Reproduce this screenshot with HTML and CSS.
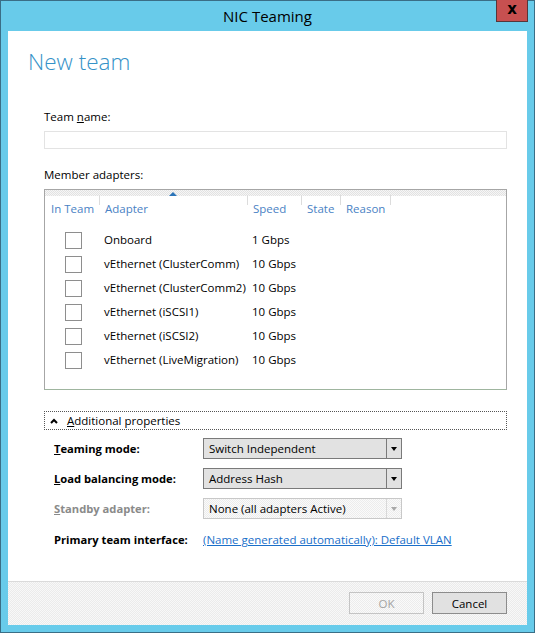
FILE: index.html
```html
<!DOCTYPE html>
<html>
<head>
<meta charset="utf-8">
<link rel="stylesheet" href="styles.css">
</head>
<body>
<div class="window">
  <div class="titlebar">
    <span class="title">NIC Teaming</span>
    <span class="close">x</span>
  </div>
  <div class="client">
    <div class="main">
      <h1 class="heading">New team</h1>
      <label class="field-label">Team <u>n</u>ame:</label>
      <div class="textbox"></div>
      <label class="field-label members">Member adapters:</label>
      <div class="listbox">
        <div class="list-top"></div>
        <div class="grid header">
          <div class="hcell">In Team</div>
          <div class="hcell sep sorted">Adapter<span class="sort-arrow"></span></div>
          <div class="hcell sep">Speed</div>
          <div class="hcell sep">State</div>
          <div class="hcell sep">Reason</div>
          <div class="hcell sep"></div>
        </div>
        <div class="grid row"><div class="cbcell"><span class="checkbox"></span></div><div class="cell">Onboard</div><div class="cell">1 Gbps</div></div>
        <div class="grid row"><div class="cbcell"><span class="checkbox"></span></div><div class="cell">vEthernet (ClusterComm)</div><div class="cell">10 Gbps</div></div>
        <div class="grid row"><div class="cbcell"><span class="checkbox"></span></div><div class="cell">vEthernet (ClusterComm2)</div><div class="cell">10 Gbps</div></div>
        <div class="grid row"><div class="cbcell"><span class="checkbox"></span></div><div class="cell">vEthernet (iSCSI1)</div><div class="cell">10 Gbps</div></div>
        <div class="grid row"><div class="cbcell"><span class="checkbox"></span></div><div class="cell">vEthernet (iSCSI2)</div><div class="cell">10 Gbps</div></div>
        <div class="grid row"><div class="cbcell"><span class="checkbox"></span></div><div class="cell">vEthernet (LiveMigration)</div><div class="cell">10 Gbps</div></div>
      </div>
      <div class="expander">
        <svg class="chevron" width="8" height="6" viewBox="0 0 8 6"><path d="M1 5 L4 2 L7 5" fill="none" stroke="#000" stroke-width="2"/></svg>
        <span><u>A</u>dditional properties</span>
      </div>
      <div class="props">
        <div class="prop">
          <span class="plabel"><u>T</u>eaming mode:</span>
          <div class="combo"><span class="combo-text">Switch Independent</span><span class="combo-btn"><span class="tri"></span></span></div>
        </div>
        <div class="prop">
          <span class="plabel"><u>L</u>oad balancing mode:</span>
          <div class="combo"><span class="combo-text">Address Hash</span><span class="combo-btn"><span class="tri"></span></span></div>
        </div>
        <div class="prop">
          <span class="plabel disabled"><u>S</u>tandby adapter:</span>
          <div class="combo off"><span class="combo-text">None (all adapters Active)</span><span class="combo-btn"><span class="tri"></span></span></div>
        </div>
        <div class="prop">
          <span class="plabel">Primary team interface:</span>
          <a class="link">(Name generated automatically): Default VLAN</a>
        </div>
      </div>
    </div>
    <div class="footer">
      <span class="btn btn-off">OK</span>
      <span class="btn">Cancel</span>
    </div>
  </div>
</div>
</body>
</html>
```

FILE: styles.css
```css
* { box-sizing: border-box; }
html, body { margin: 0; padding: 0; }
body {
  font-family: "Open Sans", "Liberation Sans", sans-serif;
  font-size: 11.5px;
  color: #000;
}
.window {
  width: 535px;
  height: 633px;
  background: #68cbea;
  border: 1px solid #3a6e86;
  padding: 0 7px 7px 7px;
  display: flex;
  flex-direction: column;
  position: relative;
}
.titlebar {
  height: 30px;
  flex: none;
  display: flex;
  align-items: center;
  justify-content: center;
}
.title {
  font-size: 15px;
  color: #000;
  margin-top: 0px;
}
.close {
  position: absolute;
  top: -1px;
  right: 6px;
  width: 32px;
  height: 22px;
  background: #c75050;
  border: 1px solid #56363a;
  border-top: none;
  color: #000;
  font-weight: bold;
  font-family: "DejaVu Sans", sans-serif;
  font-size: 15px;
  line-height: 19px;
  text-align: center;
}
.client {
  flex: 1;
  background: #fff;
  display: flex;
  flex-direction: column;
}
.main {
  flex: 1;
  padding: 15px 20px 0 36px;
  display: flex;
  flex-direction: column;
}
.heading {
  margin: 0 0 0 -16px;
  font-size: 22.5px;
  line-height: 32px;
  height: 32px;
  font-weight: 300;
  color: #3592c8;
}
.field-label {
  display: block;
  margin-top: 30px;
  line-height: 17px;
  height: 16px;
}
.field-label.members { margin-top: 17px; }
.textbox {
  margin-top: 7px;
  width: 463px;
  height: 18px;
  border: 1px solid #e3e3e3;
}
.listbox {
  margin-top: 7px;
  width: 463px;
  height: 201px;
  border: 1px solid #a6a6a6;
  border-bottom-color: #9fb59f;
}
.list-top {
  height: 6px;
  background: repeating-conic-gradient(#e2e2e2 0 25%, #f6f6f6 0 50%) 0 0 / 2px 2px;
}
.grid {
  display: grid;
  grid-template-columns: 54px 148px 54px 39px 50px 1fr;
}
.header {
  height: 32px;
}
.hcell {
  position: relative;
  color: #4a82c4;
  padding: 5px 0 0 6px;
  line-height: 16px;
  white-space: nowrap;
}
.hcell.sep::before {
  content: "";
  position: absolute;
  left: 0;
  top: -1px;
  height: 10px;
  border-left: 1px solid #dcdcdc;
}
.sort-arrow {
  position: absolute;
  left: 70px;
  top: -4px;
  width: 0;
  height: 0;
  border-left: 4px solid transparent;
  border-right: 4px solid transparent;
  border-bottom: 4px solid #2b74b8;
}
.row {
  height: 24px;
  align-items: center;
}
.cbcell { padding-left: 20px; display: flex; align-items: center; }
.checkbox {
  width: 17px;
  height: 17px;
  border: 1px solid #8e8e8e;
  background: #fff;
}
.cell {
  padding-left: 5px;
  white-space: nowrap;
  line-height: 18px;
}
.expander {
  margin-top: 21px;
  width: 463px;
  height: 19px;
  border: 1px dotted #555;
  display: flex;
  align-items: center;
  padding-left: 5px;
  gap: 9px;
}
.chevron { flex: none; }
.props {
  margin-top: 8px;
  padding-left: 10px;
  display: flex;
  flex-direction: column;
  gap: 9px;
}
.prop {
  display: flex;
  align-items: center;
  height: 21px;
}
.prop:last-child { margin-top: 1px; }
.plabel {
  width: 149px;
  flex: none;
  font-weight: bold;
  font-size: 11.2px;
}
.plabel.disabled { color: #8a8a8a; }
.combo {
  width: 199px;
  height: 21px;
  border: 1px solid #7a7a7a;
  background: #e2e2e2;
  display: flex;
  align-items: stretch;
}
.combo-text {
  flex: 1;
  padding-left: 5px;
  line-height: 20px;
}
.combo-btn {
  width: 15px;
  border-left: 1px solid #7a7a7a;
  display: flex;
  align-items: center;
  justify-content: center;
}
.tri {
  width: 0; height: 0;
  border-left: 3.5px solid transparent;
  border-right: 3.5px solid transparent;
  border-top: 4px solid #000;
}
.combo.off {
  border-color: #c8c8c8;
  background: repeating-conic-gradient(#ececec 0 25%, #fafafa 0 50%) 0 0 / 2px 2px;
}
.combo.off .combo-btn { border-left-color: #d8d8d8; }
.combo.off .tri { border-top-color: #a8a8a8; }
.link {
  color: #1a6fc9;
  text-decoration: underline;
}
.footer {
  height: 44px;
  flex: none;
  border-top: 1px solid #dadada;
  background: repeating-conic-gradient(#ebebeb 0 25%, #f8f8f8 0 50%) 0 0 / 2px 2px;
  display: flex;
  justify-content: flex-end;
  align-items: flex-start;
  padding: 10px 20px 0 0;
  gap: 8px;
}
.btn {
  width: 75px;
  height: 22px;
  border: 1px solid #8c8c8c;
  background: #e1e1e1;
  text-align: center;
  line-height: 21px;
}
.btn-off {
  border-color: #c4c4c4;
  color: #a4a4a4;
  background: repeating-conic-gradient(#ececec 0 25%, #fafafa 0 50%) 0 0 / 2px 2px;
}
```
